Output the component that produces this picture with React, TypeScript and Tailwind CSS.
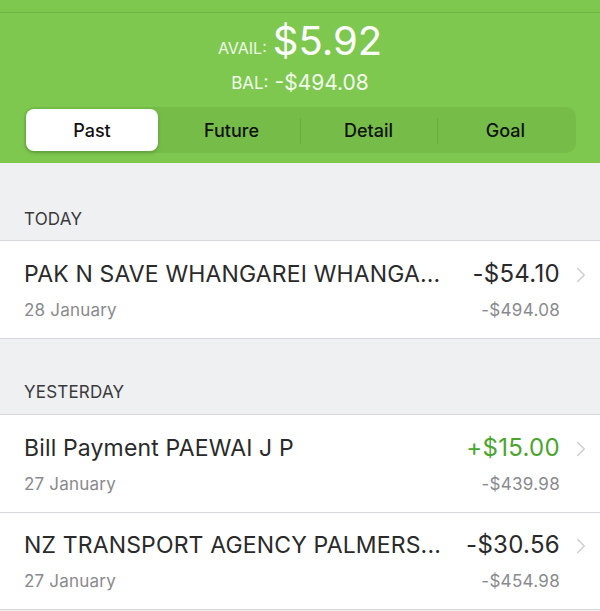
import { ChevronRight } from "lucide-react"

const rows = [
  {
    section: "TODAY",
    items: [
      { title: "PAK N SAVE WHANGAREI WHANGA...", date: "28 January", amount: "-$54.10", balance: "-$494.08", credit: false },
    ],
  },
  {
    section: "YESTERDAY",
    items: [
      { title: "Bill Payment PAEWAI J P", date: "27 January", amount: "+$15.00", balance: "-$439.98", credit: true },
      { title: "NZ TRANSPORT AGENCY PALMERS...", date: "27 January", amount: "-$30.56", balance: "-$454.98", credit: false },
    ],
  },
]

const tabs = ["Past", "Future", "Detail", "Goal"]

export default function App() {
  return (
    <div className="w-[600px] h-[611px] overflow-hidden bg-[#eff0f2] font-['Inter',sans-serif]">
      <header className="bg-[#7ec850]">
        <div className="h-[12px]" />
        <div className="h-px bg-[#6fb444]" />
        <div className="flex items-end justify-center pt-[8px] text-white">
          <span className="text-[16px] leading-none mb-[5px] mr-[6px] text-[#eef8e6]">AVAIL:</span>
          <span className="text-[40px] leading-none">$5.92</span>
        </div>
        <div className="flex items-end justify-center mt-[11px] text-[#f2faec]">
          <span className="text-[17px] leading-none mr-[6px] mb-[1px]">BAL:</span>
          <span className="text-[21px] leading-none">-$494.08</span>
        </div>
        <div className="px-[24px] pt-[14px] pb-[10px]">
          <div className="flex h-[46px] rounded-[10px] bg-[#75bd48] p-[2px]">
            {tabs.map((t, i) => (
              <div key={t} className="flex-1 flex items-center relative">
                {i >= 2 && <div className="absolute left-0 top-[9px] h-[26px] w-px bg-[#68ab3e]" />}
                <div
                  className={
                    i === 0
                      ? "flex-1 h-full mr-[5px] flex items-center justify-center rounded-[8px] bg-white shadow-[0_2px_4px_rgba(0,0,0,0.18)] text-[18px] font-medium text-[#111]"
                      : "flex-1 h-full flex items-center justify-center text-[18px] font-medium text-[#111]"
                  }
                >
                  {t}
                </div>
              </div>
            ))}
          </div>
        </div>
      </header>
      {rows.map((s, si) => (
        <section key={s.section}>
          <div className={si === 0 ? "h-[77px] flex items-end pb-[8px] px-[24px]" : "h-[75px] flex items-end pb-[9px] px-[24px]"}>
            <span className="text-[17px] text-[#3a3a3c] tracking-[0.2px]">{s.section}</span>
          </div>
          <div className="bg-white border-t border-b border-[#d8d8dc]">
            {s.items.map((it, ii) => (
              <div
                key={it.title}
                className={
                  ii > 0
                    ? "h-[97px] flex items-center border-t border-[#d8d8dc] pl-[24px] pr-[6px]"
                    : "h-[97px] flex items-center pl-[24px] pr-[6px]"
                }
              >
                <div className="flex-1 min-w-0">
                  <div className="flex items-center justify-between">
                    <span className="text-[23px] tracking-[0.15px] text-[#2a2a2a] whitespace-nowrap">{it.title}</span>
                    <span className={it.credit ? "text-[24px] tracking-[0.3px] text-[#4aa52e]" : "text-[24px] tracking-[0.3px] text-[#2a2a2a]"}>{it.amount}</span>
                  </div>
                  <div className="flex items-center justify-between mt-[6px]">
                    <span className="text-[17px] tracking-[0.2px] text-[#8a8a8e]">{it.date}</span>
                    <span className="text-[17px] tracking-[0.3px] text-[#8a8a8e]">{it.balance}</span>
                  </div>
                </div>
                <ChevronRight className="w-[26px] h-[26px] text-[#d0d0d4] ml-[8px] mb-[30px]" strokeWidth={1.5} />
              </div>
            ))}
          </div>
        </section>
      ))}
    </div>
  )
}
